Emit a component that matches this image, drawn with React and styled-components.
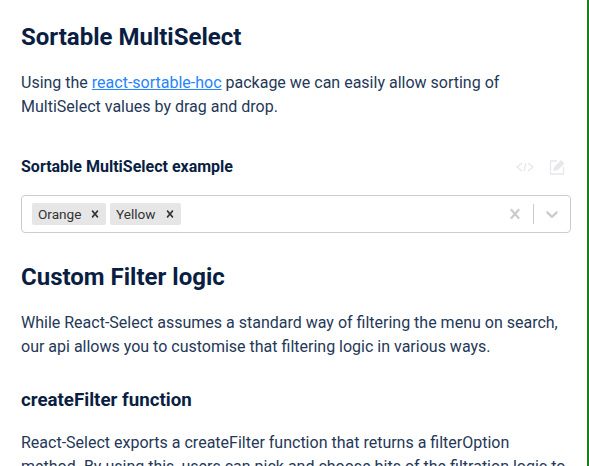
import React from "react";
import styled, { createGlobalStyle } from "styled-components";

const Global = createGlobalStyle`
  html, body {
    margin: 0;
    padding: 0;
    background: #fff;
    overflow: hidden;
  }
`;

const Page = styled.main`
  box-sizing: border-box;
  width: 589px;
  height: 466px;
  overflow: hidden;
  padding: 22px 16px 0 21px;
  border-right: 2px solid #1a7f1a;
  font-family: Roboto, "Liberation Sans", sans-serif;
  color: #253858;
  font-size: 16px;
  line-height: 24px;
`;

const Title = styled.h1`
  margin: 0;
  font-size: 24px;
  line-height: 30px;
  font-weight: 700;
  color: #091e42;
`;

const Title2 = styled(Title).attrs({ as: "h2" })`
  margin-top: 29px;
`;

const Text = styled.p`
  margin: 19px 0 0;
`;

const Link = styled.a`
  color: #2684ff;
  text-decoration: underline;
`;

const SubTitle = styled.h3`
  margin: 29px 0 0;
  font-size: 18.72px;
  line-height: 24px;
  font-weight: 700;
  color: #091e42;
`;

const ExampleHead = styled.div`
  display: flex;
  align-items: center;
  justify-content: space-between;
  margin-top: 36px;
  height: 24px;
`;

const ExampleTitle = styled.h4`
  margin: 0;
  font-size: 16px;
  line-height: 24px;
  font-weight: 700;
  color: #091e42;
`;

const Actions = styled.div`
  display: flex;
  align-items: center;
  gap: 15px;
  padding-right: 4px;
  color: #e6e7e9;
`;

const Select = styled.div`
  box-sizing: border-box;
  display: flex;
  align-items: center;
  height: 38px;
  margin-top: 16px;
  border: 1px solid #ccc;
  border-radius: 4px;
  padding: 0 8px 0 10px;
`;

const Values = styled.div`
  flex: 1;
  display: flex;
  gap: 4px;
`;

const Chip = styled.span`
  display: flex;
  align-items: center;
  justify-content: space-between;
  box-sizing: border-box;
  width: ${(p) => p.$width}px;
  height: 22px;
  padding: 0 4px 0 6px;
  background: #e6e6e6;
  border-radius: 2px;
  font-size: 13.6px;
  color: #333;
`;

const Indicator = styled.span`
  display: flex;
  align-items: center;
  color: #ccc;
`;

const Divider = styled.span`
  width: 1px;
  height: 20px;
  margin: 0 8px;
  background: #ccc;
`;

function CloseIcon({ size }) {
  return (
    <svg width={size} height={size} viewBox="0 0 20 20" fill="currentColor" aria-hidden="true">
      <path d="M14.348 14.849c-.469.469-1.229.469-1.697 0L10 11.819l-2.651 3.029c-.469.469-1.229.469-1.697 0-.469-.469-.469-1.229 0-1.697L8.41 10 5.651 6.849c-.469-.469-.469-1.228 0-1.697.469-.469 1.228-.469 1.697 0L10 8.183l2.651-3.031c.469-.469 1.228-.469 1.697 0 .469.469.469 1.229 0 1.697L11.590 10l2.758 3.152c.469.469.469 1.228 0 1.697z" />
    </svg>
  );
}

function ChevronIcon() {
  return (
    <svg width="20" height="20" viewBox="0 0 20 20" fill="currentColor" aria-hidden="true">
      <path d="M4.516 7.548c.436-.446 1.043-.481 1.576 0L10 11.295l3.908-3.747c.533-.481 1.141-.446 1.574 0 .436.445.408 1.197 0 1.615-.406.418-4.695 4.502-4.695 4.502-.217.223-.502.335-.787.335s-.570-.112-.789-.335c0 0-4.287-4.084-4.695-4.502s-.436-1.170 0-1.615z" />
    </svg>
  );
}

function CodeIcon() {
  return (
    <svg width="18" height="12" viewBox="0 0 18 12" fill="none" stroke="currentColor" strokeWidth="1.2" aria-hidden="true">
      <path d="M6 2L1 6l5 4M12 2l5 4-5 4M10 2L8 10" />
    </svg>
  );
}

function EditIcon() {
  return (
    <svg width="18" height="16" viewBox="0 0 18 16" fill="none" stroke="currentColor" strokeWidth="1.3" aria-hidden="true">
      <path d="M8 2H1.500v13h13V8" />
      <path d="M5 11l1-3 6-6 2.500 2.500-6 6z" fill="currentColor" />
    </svg>
  );
}

export default function App() {
  return (
    <>
      <Global />
      <Page>
        <Title>Sortable MultiSelect</Title>
        <Text>
          Using the <Link href="#sortable">react-sortable-hoc</Link> package we can easily allow sorting of
          MultiSelect values by drag and drop.
        </Text>
        <ExampleHead>
          <ExampleTitle>Sortable MultiSelect example</ExampleTitle>
          <Actions>
            <CodeIcon />
            <EditIcon />
          </Actions>
        </ExampleHead>
        <Select>
          <Values>
            <Chip $width={74}>
              Orange <CloseIcon size={14} />
            </Chip>
            <Chip $width={71}>
              Yellow <CloseIcon size={14} />
            </Chip>
          </Values>
          <Indicator>
            <CloseIcon size={20} />
          </Indicator>
          <Divider />
          <Indicator>
            <ChevronIcon />
          </Indicator>
        </Select>
        <Title2>Custom Filter logic</Title2>
        <Text>
          While React-Select assumes a standard way of filtering the menu on search, our api allows you to
          customise that filtering logic in various ways.
        </Text>
        <SubTitle>createFilter function</SubTitle>
        <Text>
          React-Select exports a createFilter function that returns a filterOption method. By using this, users
          can pick and choose bits of the filtration logic to suit their needs.
        </Text>
      </Page>
    </>
  );
}
